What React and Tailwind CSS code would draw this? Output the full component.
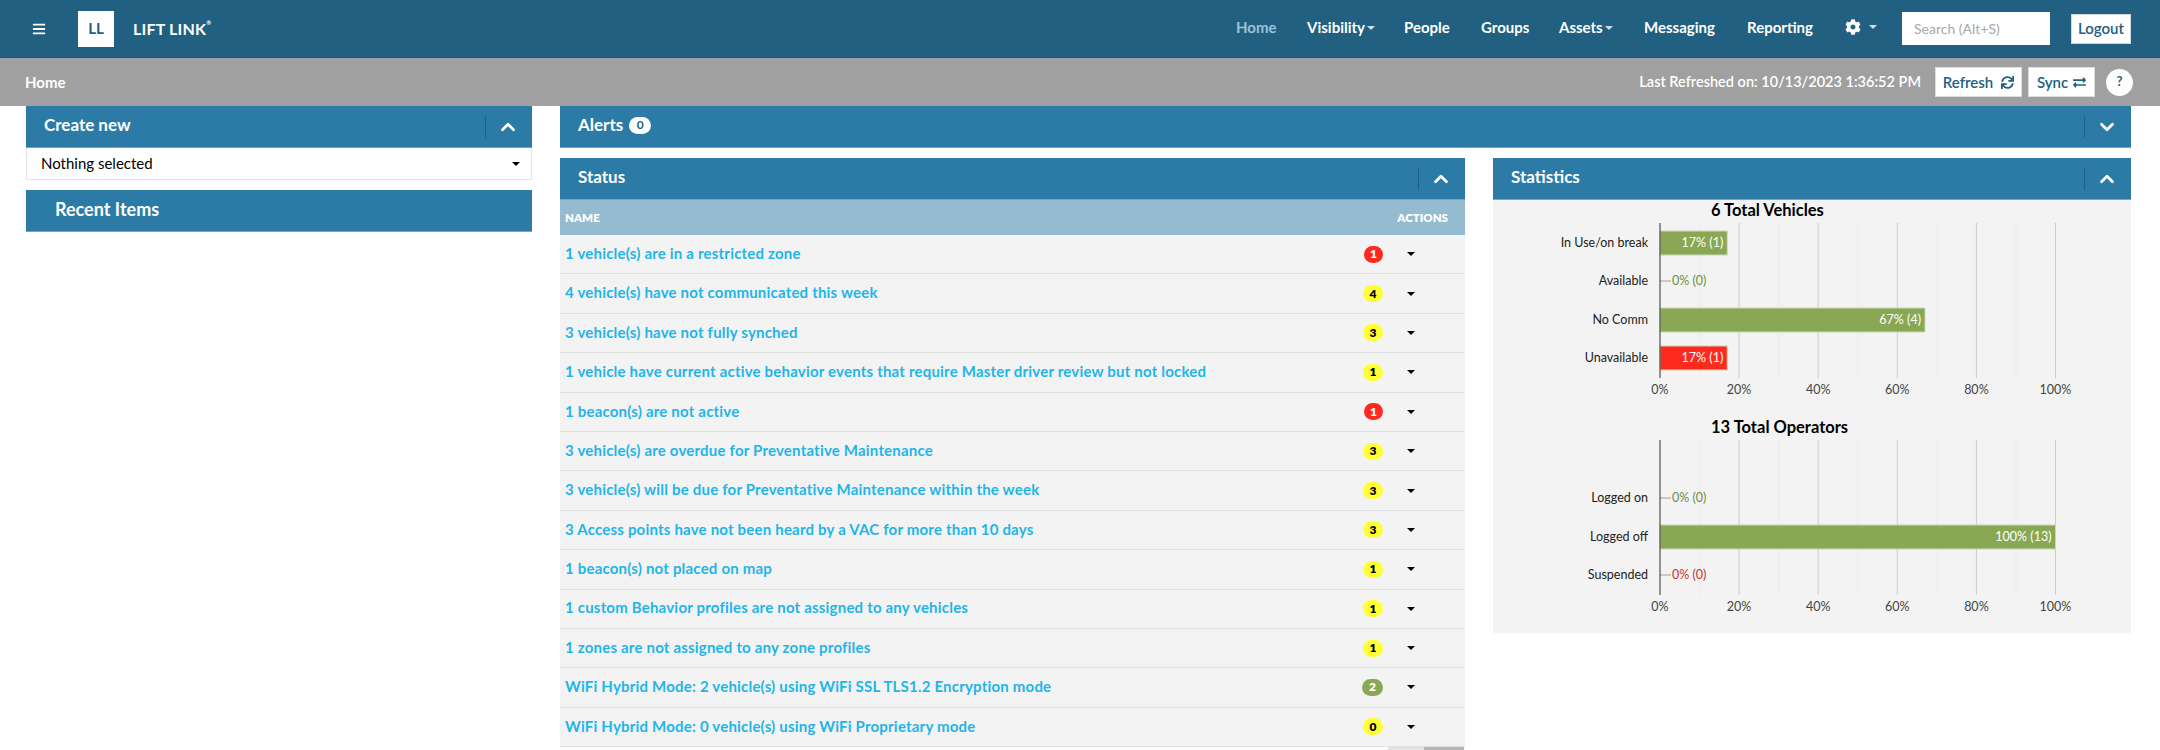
import React from 'react';
import { FaBars, FaCog, FaSync, FaExchangeAlt } from 'react-icons/fa';
import { ChevronUp, ChevronDown } from 'lucide-react';

const statusRows = [
    { text: '1 vehicle(s) are in a restricted zone', count: 1, kind: 'red' },
    { text: '4 vehicle(s) have not communicated this week', count: 4, kind: 'yellow' },
    { text: '3 vehicle(s) have not fully synched', count: 3, kind: 'yellow' },
    { text: '1 vehicle have current active behavior events that require Master driver review but not locked', count: 1, kind: 'yellow' },
    { text: '1 beacon(s) are not active', count: 1, kind: 'red' },
    { text: '3 vehicle(s) are overdue for Preventative Maintenance', count: 3, kind: 'yellow' },
    { text: '3 vehicle(s) will be due for Preventative Maintenance within the week', count: 3, kind: 'yellow' },
    { text: '3 Access points have not been heard by a VAC for more than 10 days', count: 3, kind: 'yellow' },
    { text: '1 beacon(s) not placed on map', count: 1, kind: 'yellow' },
    { text: '1 custom Behavior profiles are not assigned to any vehicles', count: 1, kind: 'yellow' },
    { text: '1 zones are not assigned to any zone profiles', count: 1, kind: 'yellow' },
    { text: 'WiFi Hybrid Mode: 2 vehicle(s) using WiFi SSL TLS1.2 Encryption mode', count: 2, kind: 'green' },
    { text: 'WiFi Hybrid Mode: 0 vehicle(s) using WiFi Proprietary mode', count: 0, kind: 'yellow' },
];

const badgeStyles = {
    red: 'bg-[#ff2a1e] text-white w-[19px]',
    yellow: 'bg-[#ffff33] text-black w-[20px]',
    green: 'bg-[#8aa854] text-white w-[21px]',
};

const vehicleBars = [
    { label: 'In Use/on break', pct: 17, value: '17% (1)', color: '#8aa854' },
    { label: 'Available', pct: 0, value: '0% (0)', color: '#6f8d3c' },
    { label: 'No Comm', pct: 67, value: '67% (4)', color: '#8aa854' },
    { label: 'Unavailable', pct: 17, value: '17% (1)', color: '#ff2a1e' },
];

const operatorBars = [
    null,
    { label: 'Logged on', pct: 0, value: '0% (0)', color: '#6f8d3c' },
    { label: 'Logged off', pct: 100, value: '100% (13)', color: '#8aa854' },
    { label: 'Suspended', pct: 0, value: '0% (0)', color: '#c8322c' },
];

function Caret({ small }) {
    return <span className={`inline-block border-x-[4px] border-t-[4px] border-x-transparent ${small ? 'border-t-white/80 ml-[2px] border-x-[3px] border-t-[3px]' : 'border-t-black'}`}></span>;
}

function NavLink({ children, active, caret, className = '' }) {
    return (
        <span className={`flex items-center text-[15px] font-bold whitespace-nowrap pb-[2px] ${active ? 'text-[#9cc3d8]' : 'text-white'} ${className}`}>
            {children}
            {caret && <Caret small />}
        </span>
    );
}

function PanelHeader({ children, open = true, indent = 'pl-[18px]' }) {
    return (
        <div className={`h-[42px] bg-[#2c7ba7] border-b border-[#6fa6c6] flex items-center justify-between text-white text-[17px] font-bold shrink-0 ${indent}`}>
            <div className="flex items-center gap-[6px] pb-[3px]">{children}</div>
            <div className="flex items-center h-[22px] border-l border-[#1f6088] w-[47px] justify-center pr-[3px]">
                {open ? <ChevronUp size={22} strokeWidth={3} /> : <ChevronDown size={22} strokeWidth={3} />}
            </div>
        </div>
    );
}

function BarChart({ title, bars }) {
    const x0 = 167;
    const fullWidth = 395.5;
    const rows = [43, 81, 120, 158];
    const ticks = [0, 10, 20, 30, 40, 50, 60, 70, 80, 90, 100];
    return (
        <svg width="638" height="217" className="block">
            <text x="218" y="16" fontSize="16.5" fontWeight="700" fill="#000">{title}</text>
            {ticks.slice(1).map((t) => (
                <line key={t} x1={x0 + (t / 100) * fullWidth} x2={x0 + (t / 100) * fullWidth} y1="23" y2="178" stroke={t % 20 === 0 ? '#cccccc' : '#ebebeb'} />
            ))}
            {bars.map((bar, i) => {
                if (!bar) return null;
                const cy = rows[i];
                const w = (bar.pct / 100) * fullWidth;
                return (
                    <g key={bar.label}>
                        <text x="155" y={cy + 4} fontSize="12.5" textAnchor="end" fill="#222">{bar.label}</text>
                        {bar.pct > 0 ? (
                            <>
                                <rect x={x0} y={cy - 12} width={w} height="24" fill={bar.color} stroke="#ccd8b8" strokeWidth="1" />
                                <text x={x0 + w - 4} y={cy + 4} fontSize="12.5" textAnchor="end" fill="#fff">{bar.value}</text>
                            </>
                        ) : (
                            <>
                                <line x1={x0} x2={x0 + 11} y1={cy} y2={cy} stroke="#bbbbbb" strokeWidth="1.5" />
                                <text x={x0 + 12} y={cy + 4} fontSize="12.5" fill={bar.color}>{bar.value}</text>
                            </>
                        )}
                    </g>
                );
            })}
            <line x1={x0} x2={x0} y1="23" y2="178" stroke="#333" />
            {ticks.filter((t) => t % 20 === 0).map((t) => (
                <text key={t} x={x0 + (t / 100) * fullWidth} y="194" fontSize="12.5" textAnchor="middle" fill="#444">{t}%</text>
            ))}
        </svg>
    );
}

export default function App() {
    return (
        <div className="relative h-[750px] w-[2160px] overflow-hidden bg-white font-['Lato',sans-serif]">
            <div className="h-[58px] bg-[#216080] border-b border-[#1c5673] flex items-center">
                <FaBars className="text-white ml-[32px]" size={14} />
                <div className="ml-[32px] w-[36px] h-[36px] bg-white flex items-center justify-center text-[#216080] text-[15px] font-bold">LL</div>
                <span className="ml-[19px] text-white text-[16px] font-bold tracking-[0.2px]">LIFT LINK<sup className="text-[6px] align-super">®</sup></span>
                <div className="ml-auto flex items-center pr-[29px]">
                    <NavLink active className="w-[71px]">Home</NavLink>
                    <NavLink caret className="w-[97px]">Visibility</NavLink>
                    <NavLink className="w-[77px]">People</NavLink>
                    <NavLink className="w-[78px]">Groups</NavLink>
                    <NavLink caret className="w-[85px]">Assets</NavLink>
                    <NavLink className="w-[103px]">Messaging</NavLink>
                    <NavLink className="w-[98px]">Reporting</NavLink>
                    <span className="flex items-center w-[57px] text-white pb-[4px]">
                        <FaCog size={16} />
                        <span className="ml-[6px] flex items-center"><Caret small /></span>
                    </span>
                    <div className="w-[148px] h-[33px] bg-white flex items-center pl-[12px] text-[14px] text-[#a8a8a8]">Search (Alt+S)</div>
                    <div className="ml-[21px] w-[60px] h-[30px] bg-white border border-[#cfd8dd] flex items-center justify-center text-[15px] text-[#216080] font-semibold">Logout</div>
                </div>
            </div>

            <div className="h-[48px] bg-[#a0a0a0] flex items-center pl-[25px] pr-[27px]">
                <span className="text-white text-[15px] font-bold">Home</span>
                <span className="ml-auto text-white text-[14.5px] font-semibold">Last Refreshed on: 10/13/2023 1:36:52 PM</span>
                <div className="ml-[14px] w-[87px] h-[30px] bg-white border border-[#ddd] flex items-center justify-center gap-[8px] text-[15px] font-semibold text-[#216080]">
                    Refresh <FaSync size={13} />
                </div>
                <div className="ml-[6px] w-[67px] h-[30px] bg-white border border-[#ddd] flex items-center justify-center gap-[5px] text-[15px] font-semibold text-[#216080]">
                    Sync <FaExchangeAlt size={13} />
                </div>
                <div className="ml-[11px] w-[27px] h-[27px] rounded-full bg-white flex items-center justify-center text-[13px] font-bold text-[#216080]">?</div>
            </div>

            <div className="flex pl-[26px] pr-[29px] gap-[28px]">
                <div className="w-[506px] shrink-0">
                    <PanelHeader>Create new</PanelHeader>
                    <div className="h-[32px] bg-white border border-t-0 border-[#e6e6e6] flex items-center justify-between pl-[14px] pr-[11px] text-[15px] text-black">
                        Nothing selected
                        <Caret />
                    </div>
                    <div className="mt-[10px] h-[42px] bg-[#2c7ba7] border-b border-[#6fa6c6] flex items-center pl-[29px] pb-[2px] text-white text-[18px] font-bold">Recent Items</div>
                </div>

                <div className="flex-1 min-w-0">
                    <PanelHeader open={false}>
                        Alerts
                        <span className="h-[17px] min-w-[22px] px-[7px] rounded-full bg-white text-[#216080] text-[12px] font-bold flex items-center justify-center">0</span>
                    </PanelHeader>

                    <div className="flex gap-[28px] mt-[10px] items-start">
                        <div className="w-[905px] shrink-0">
                            <PanelHeader>Status</PanelHeader>
                            <div className="h-[35px] bg-[#95bbd1] flex items-center justify-between pl-[5px] pr-[17px] text-white text-[11.5px] font-extrabold">
                                <span>NAME</span>
                                <span>ACTIONS</span>
                            </div>
                            {statusRows.map((row) => (
                                <div key={row.text} className="h-[39.4px] bg-[#f3f3f3] border-b border-[#e0e0e0] flex items-center pl-[5px]">
                                    <span className="text-[15px] font-bold text-[#1fb5ea] whitespace-nowrap tracking-[0.2px] pb-[2px]">{row.text}</span>
                                    <span className="ml-auto flex items-center">
                                        <span className={`h-[17px] rounded-full flex items-center justify-center text-[12px] font-extrabold ${badgeStyles[row.kind]}`}>{row.count}</span>
                                        <span className="w-[82px] pl-[24px] flex items-center"><Caret /></span>
                                    </span>
                                </div>
                            ))}
                        </div>

                        <div className="flex-1 min-w-0">
                            <PanelHeader>Statistics</PanelHeader>
                            <div className="bg-[#f3f3f3] h-[433px]">
                                <BarChart title="6 Total Vehicles" bars={vehicleBars} />
                                <BarChart title="13 Total Operators" bars={operatorBars} />
                            </div>
                        </div>
                    </div>
                </div>
            </div>

            <div className="absolute left-[1388px] top-[747px] h-[3px] w-[36px] bg-[#e3e3e3]"></div>
            <div className="absolute left-[1424px] top-[747px] h-[3px] w-[40px] bg-[#b5b5b5]"></div>
        </div>
    );
}
